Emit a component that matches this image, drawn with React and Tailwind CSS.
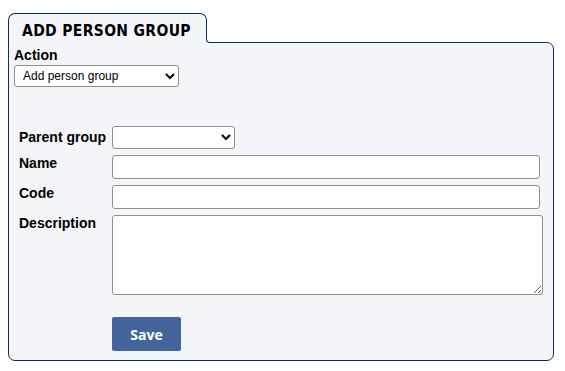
import React from "react";

export default function App() {
  return (
    <div className="w-[565px] h-[371px] bg-white pt-[13px] pl-[8px]" style={{ fontFamily: '"Liberation Sans", Arial, sans-serif' }}>
      <div className="w-[546px]">
        <div className="relative z-10 flex">
          <div className="relative h-[30px] w-[199px] -mb-px rounded-t-[7px] border border-b-0 border-[#0b2d5b] bg-[#f4f5f9] pl-[13px] pt-[5px]">
            <span className="text-[15.5px] font-bold text-black tracking-[0.35px]" style={{ fontFamily: '"DejaVu Sans Condensed", "DejaVu Sans", Verdana, sans-serif', fontStretch: "semi-condensed" }}>ADD PERSON GROUP</span>
            <div className="absolute left-[100%] bottom-0 h-[5px] w-[5px] bg-[#f4f5f9]" />
            <div className="absolute left-[100%] bottom-0 h-[5px] w-[5px] rounded-bl-[4px] border-b border-l border-[#0b2d5b] bg-white" />
          </div>
        </div>
        <div className="h-[319px] rounded-b-[7px] rounded-tr-[7px] border border-[#0b2d5b] bg-[#f4f5f9] px-[5px] pt-[5px]">
          <div className="text-[14px] font-bold leading-[15px] text-black">Action</div>
          <select className="mt-[2px] h-[22px] w-[165px] rounded-[3px] border border-[#8f8f8f] bg-white pl-[4px] text-[12px] text-black">
            <option>Add person group</option>
          </select>
          <div className="ml-[5px] mt-[39px] grid grid-cols-[93px_1fr] gap-y-[6px] text-[14px] font-bold leading-[15px] text-black">
            <div className="flex items-center">Parent group</div>
            <select className="h-[23px] w-[123px] rounded-[3px] border border-[#8f8f8f] bg-white" />
            <div className="pt-[1px]">Name</div>
            <input className="h-[24px] w-[428px] rounded-[3px] border border-[#8f8f8f] bg-white" />
            <div className="pt-[1px]">Code</div>
            <input className="h-[24px] w-[428px] rounded-[3px] border border-[#8f8f8f] bg-white" />
            <div className="pt-[1px]">Description</div>
            <textarea className="h-[80px] w-[431px] rounded-[3px] border border-[#8f8f8f] bg-white" />
            <div />
            <button className="mt-[16px] h-[34px] w-[69px] rounded-[2px] bg-[#44649c] text-[14px] font-bold text-white" style={{ fontFamily: '"Open Sans", sans-serif' }}>Save</button>
          </div>
        </div>
      </div>
    </div>
  );
}
